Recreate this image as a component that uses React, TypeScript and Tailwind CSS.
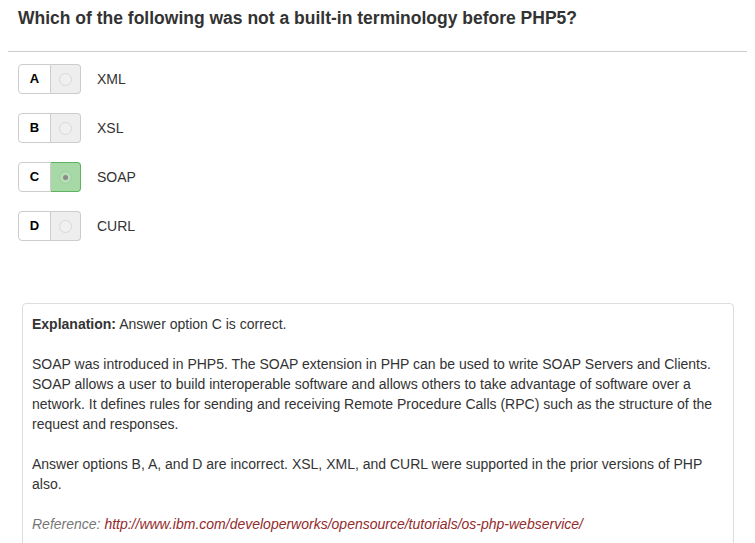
import React from 'react';

const options = [
  { key: 'A', label: 'XML', checked: false },
  { key: 'B', label: 'XSL', checked: false },
  { key: 'C', label: 'SOAP', checked: true },
  { key: 'D', label: 'CURL', checked: false },
];

function OptionRow({ letter, label, checked }: { letter: string; label: string; checked: boolean }) {
  return (
    <div className="flex items-center h-[30px]">
      <div className="flex h-[30px]">
        <div className="w-[33px] flex items-center justify-center bg-white border border-[#ccc] rounded-l-[4px] text-[13px] font-bold text-black">
          {letter}
        </div>
        <div
          className={
            checked
              ? 'w-[30px] flex items-center justify-center bg-[#a6d9a6] border border-l-0 border-[#5fb25f] rounded-r-[4px]'
              : 'w-[30px] flex items-center justify-center bg-[#eee] border border-l-0 border-[#ccc] rounded-r-[4px]'
          }
        >
          <span
            className={
              checked
                ? 'w-[13px] h-[13px] rounded-full bg-[#b5deb5] border border-[#9ccc9c] flex items-center justify-center'
                : 'w-[13px] h-[13px] rounded-full bg-[#f0f0f0] border border-[#d8d8d8]'
            }
          >
            {checked && <span className="w-[5px] h-[5px] rounded-full bg-[#8a8a8a]" />}
          </span>
        </div>
      </div>
      <span className="ml-[16px] text-[14px] text-[#333]">{label}</span>
    </div>
  );
}

export default function App() {
  return (
    <div className="w-[755px] h-[543px] overflow-hidden bg-white text-[#333]" style={{ fontFamily: '"Liberation Sans", Arial, sans-serif' }}>
      <h1 className="pl-[18px] pt-[8px] text-[17.5px] leading-[20px] font-bold text-[#333]">
        Which of the following was not a built-in terminology before PHP5?
      </h1>
      <div className="mx-[8px] mt-[23px] border-t border-[#ccc]" />

      <div className="pl-[18px] pt-[12px] flex flex-col gap-[19px]">
        {options.map((o) => (
          <OptionRow key={o.key} letter={o.key} label={o.label} checked={o.checked} />
        ))}
      </div>

      <div className="ml-[22px] mt-[62px] w-[712px] border border-[#ddd] rounded-[4px] px-[9px] pt-[10px] pb-[20px] text-[14px] leading-[20px] text-[#333]">
        <p>
          <span className="font-bold">Explanation:</span> Answer option C is correct.
        </p>
        <p className="mt-[20px]">
          SOAP was introduced in PHP5. The SOAP extension in PHP can be used to write SOAP Servers and Clients. SOAP allows a
          user to build interoperable software and allows others to take advantage of software over a network. It defines
          rules for sending and receiving Remote Procedure Calls (RPC) such as the structure of the request and responses.
        </p>
        <p className="mt-[20px]">
          Answer options B, A, and D are incorrect. XSL, XML, and CURL were supported in the prior versions of PHP also.
        </p>
        <p className="mt-[20px] italic text-[#777]">
          Reference:{' '}
          <a className="text-[#922b2b]" href="#">
            http://www.ibm.com/developerworks/opensource/tutorials/os-php-webservice/
          </a>
        </p>
      </div>
    </div>
  );
}
